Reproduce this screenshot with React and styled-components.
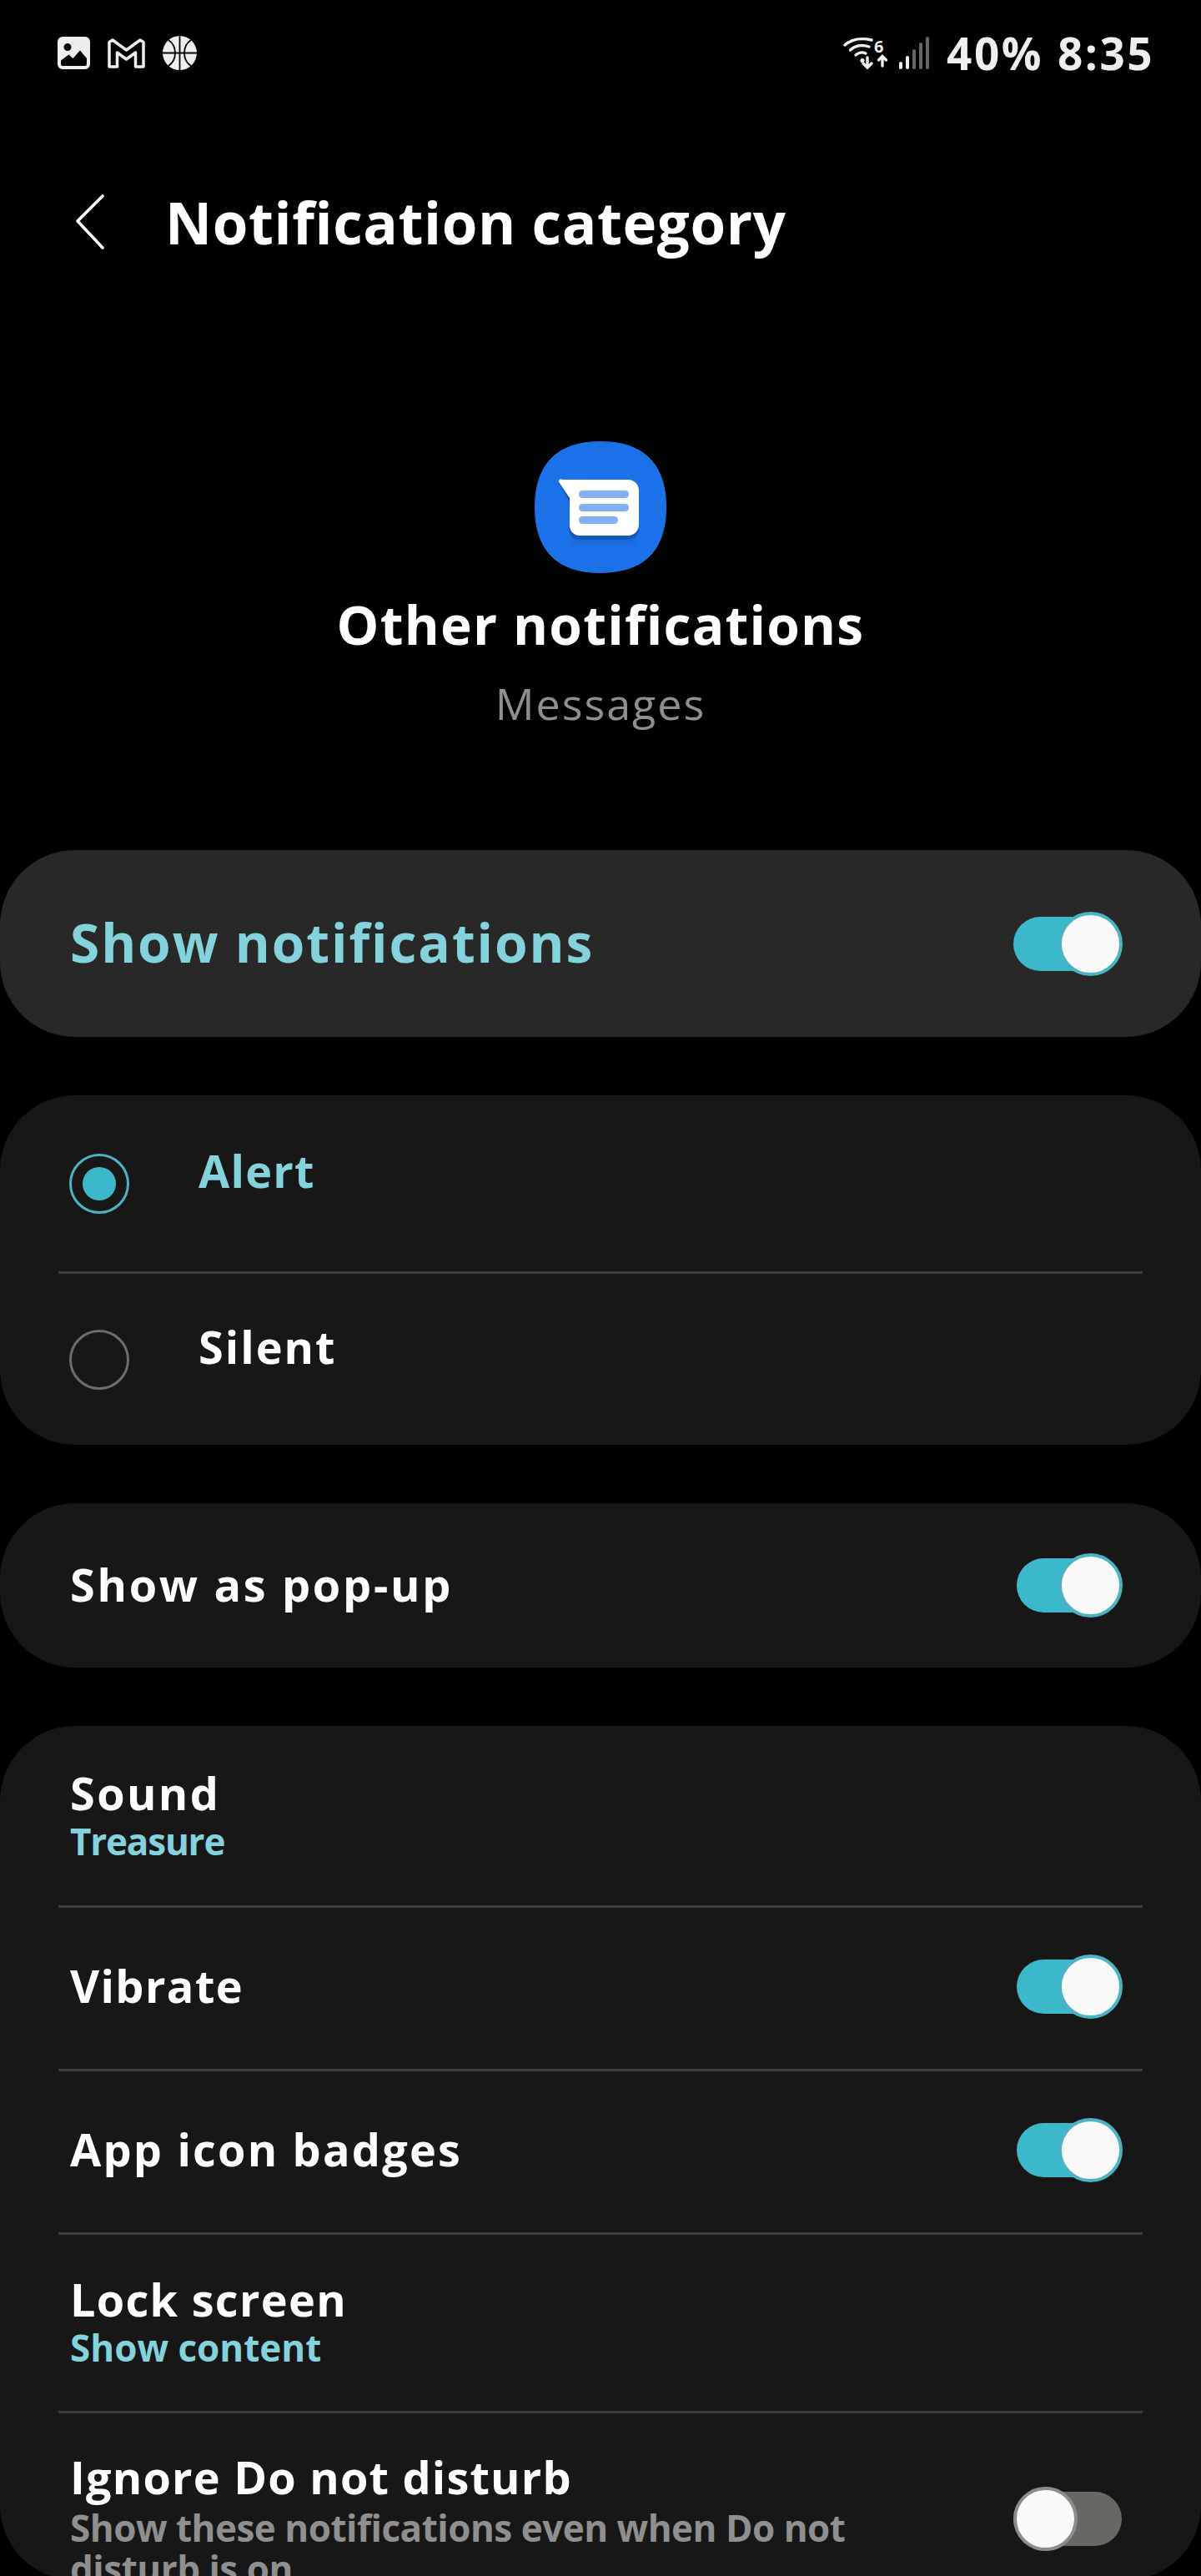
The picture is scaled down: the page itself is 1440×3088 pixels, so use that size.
import React from "react";
import styled, { createGlobalStyle } from "styled-components";

const GlobalStyle = createGlobalStyle`
  html, body {
    margin: 0;
    background: #000;
  }
  #root {
    height: 3088px;
    overflow: hidden;
  }
`;

const FONT = `"Open Sans", "Noto Sans", sans-serif`;

function PictureIcon() {
  return (
    <svg width="39" height="39" viewBox="0 0 39 39">
      <path
        fill="#eee"
        fillRule="evenodd"
        d="M6 0h27a6 6 0 0 1 6 6v27a6 6 0 0 1-6 6H6a6 6 0 0 1-6-6V6a6 6 0 0 1 6-6ZM12 8a4.500 4.500 0 1 0 0 9 4.500 4.500 0 0 0 0-9ZM4 28.500v4.500a2 2 0 0 0 2 2h27a2 2 0 0 0 2-2v-7l-8-9.500-8.500 9.500-5-4.500Z"
      />
    </svg>
  );
}

function MailIcon() {
  return (
    <svg width="45" height="36" viewBox="0 0 45 36">
      <path
        fill="none"
        stroke="#eee"
        strokeWidth="3.500"
        strokeLinejoin="round"
        d="M2 4.500 6 2l16.500 12L39 2l4 2.500V34h-9.500V17l-11 8-11-8v17H2Z"
      />
    </svg>
  );
}

function BallIcon() {
  return (
    <svg width="41" height="41" viewBox="0 0 41 41">
      <circle cx="20.500" cy="20.500" r="20.500" fill="#eee" />
      <path
        fill="none"
        stroke="#000"
        strokeWidth="1.800"
        d="M20.500 0v41M0 20.500h41M7 5c6 4 8 10 8 15.500S13 32 7 36M34 5c-6 4-8 10-8 15.500S28 32 34 36"
      />
    </svg>
  );
}

function WifiIcon() {
  return (
    <svg width="54" height="41" viewBox="0 0 54 41">
      <g fill="none" stroke="#eee" strokeWidth="3.400" strokeLinecap="round">
        <path d="M2 11C10 4 22 2 34 5" />
        <path d="M8.500 17C14 12 22 10 31 13" />
        <path d="M15 23c3-3 8-4 12-2" />
        <path d="M29 26v12M24 33l5 5 5-5" />
        <path d="M47 36V25M42.500 29l4.500-4.500 4.500 4.500" />
      </g>
      <circle cx="23" cy="29.500" r="2.600" fill="#eee" />
      <text x="37" y="20" fill="#eee" fontFamily={FONT} fontSize="20" fontWeight="700">6</text>
    </svg>
  );
}

function SignalIcon() {
  const bars = [
    { x: 0, h: 9, c: "#eee" },
    { x: 8, h: 16, c: "#eee" },
    { x: 16, h: 24, c: "#666" },
    { x: 24, h: 32, c: "#666" },
    { x: 32, h: 39, c: "#666" },
  ];
  return (
    <svg width="36" height="39" viewBox="0 0 36 39">
      {bars.map((b) => (
        <rect key={b.x} x={b.x} y={39 - b.h} width="4" height={b.h} rx="2" fill={b.c} />
      ))}
    </svg>
  );
}

function BackIcon() {
  return (
    <svg width="36" height="66" viewBox="0 0 36 66">
      <path d="M33 2 3 32l30 32" fill="none" stroke="#fff" strokeWidth="3.600" strokeLinecap="round" strokeLinejoin="round" />
    </svg>
  );
}

function MessagesIcon() {
  return (
    <svg width="158" height="158" viewBox="0 0 158 158">
      <defs>
        <linearGradient id="bubbleShade" x1="0" y1="0" x2="0" y2="1">
          <stop offset="0" stopColor="#1558b8" stopOpacity="0.55" />
          <stop offset="1" stopColor="#1a73e8" stopOpacity="0" />
        </linearGradient>
      </defs>
      <path fill="#1b72e8" d="M79 0C131 0 158 27 158 79S131 158 79 158 0 131 0 79 27 0 79 0Z" />
      <path fill="url(#bubbleShade)" d="M44 113h78v20H44Z" />
      <path
        fill="#1558b8"
        d="M30 50l12 18v33a12 12 0 0 0 12 17h58a13 13 0 0 0 13-13v-6H42V74Z"
      />
      <path
        fill="#fff"
        d="M33 46h79a13 13 0 0 1 13 13v41a13 13 0 0 1-13 13H54a12 12 0 0 1-12-12V68L30 50a2.500 2.500 0 0 1 3-4Z"
      />
      <rect x="53" y="59" width="60" height="9" rx="4.500" fill="#86aef5" />
      <rect x="53" y="75" width="60" height="9" rx="4.500" fill="#86aef5" />
      <rect x="53" y="90" width="47" height="9" rx="4.500" fill="#86aef5" />
    </svg>
  );
}

const Page = styled.div`
  font-family: ${FONT};
  font-weight: 700;
  color: #fff;
  background: #000;
`;

const StatusBar = styled.div`
  height: 196px;
  padding: 43px 56px 0 69px;
  box-sizing: border-box;
  display: flex;
  justify-content: space-between;
  align-items: flex-start;
`;

const StatusGroup = styled.div`
  display: flex;
  align-items: center;
  gap: ${(p) => p.$gap}px;
`;

const StatusText = styled.span`
  font-size: 53px;
  line-height: 40px;
  color: #eee;
  letter-spacing: 2.500px;
  margin-left: ${(p) => p.$left || 0}px;
`;

const Header = styled.div`
  display: flex;
  align-items: center;
  height: 140px;
  padding-left: 90px;
`;

const HeaderTitle = styled.h1`
  margin: 0 0 0 72px;
  font-size: 69px;
  line-height: 80px;
  letter-spacing: 0.600px;
  font-weight: 700;
`;

const Hero = styled.div`
  display: flex;
  flex-direction: column;
  align-items: center;
  padding-top: 193px;
`;

const HeroTitle = styled.div`
  font-size: 64px;
  line-height: 80px;
  letter-spacing: 1.200px;
  margin-top: 22px;
`;

const HeroSub = styled.div`
  font-size: 52px;
  line-height: 60px;
  letter-spacing: 2px;
  margin-top: 24px;
  color: #8f8f8f;
  font-weight: 500;
`;

const Cards = styled.div`
  display: flex;
  flex-direction: column;
  gap: 70px;
  margin-top: 146px;
`;

const Card = styled.section`
  background: ${(p) => (p.$light ? "#282828" : "#171717")};
  border-radius: 90px;
`;

const Row = styled.div`
  height: ${(p) => p.$height}px;
  padding: 0 95px ${(p) => p.$lift || 0}px 84px;
  box-sizing: border-box;
  display: flex;
  align-items: center;
  justify-content: space-between;
`;

const TopRow = styled(Row)`
  align-items: flex-start;
  padding-top: 44px;
`;

const RadioRow = styled(Row)`
  justify-content: flex-start;
  gap: 83px;
  padding-left: 83px;
`;

const Divider = styled.div`
  height: 3px;
  margin: 0 70px;
  background: #3c3c3c;
`;

const RowText = styled.div`
  display: flex;
  flex-direction: column;
  min-width: 0;
`;

const Label = styled.div`
  font-size: ${(p) => p.$size || 54}px;
  line-height: 64px;
  letter-spacing: ${(p) => p.$spacing || 0}px;
  margin-bottom: ${(p) => p.$lift || 0}px;
  color: ${(p) => (p.$active ? "#84d2dc" : "#fff")};
`;

const RadioLabel = styled(Label)`
  margin-bottom: 32px;
`;

const Sub = styled.div`
  font-size: 44px;
  line-height: 49px;
  margin-top: ${(p) => (p.$muted ? 5 : 2)}px;
  letter-spacing: ${(p) => p.$spacing || 0}px;
  color: ${(p) => (p.$muted ? "#8f8f8f" : "#84d2dc")};
  max-width: 960px;
`;

const Radio = styled.div`
  width: 72px;
  height: 72px;
  box-sizing: border-box;
  border-radius: 50%;
  border: 3px solid ${(p) => (p.$on ? "#4cb3c4" : "#6d6d6d")};
  display: flex;
  align-items: center;
  justify-content: center;
  flex-shrink: 0;
  &::after {
    content: "";
    display: ${(p) => (p.$on ? "block" : "none")};
    width: 40px;
    height: 40px;
    border-radius: 50%;
    background: #3cb8cb;
  }
`;

const Toggle = styled.div`
  position: relative;
  width: ${(p) => p.$width || 126}px;
  height: 65px;
  margin-top: ${(p) => p.$top || 0}px;
  border-radius: 33px;
  background: ${(p) => (p.$on ? "#3cb8cb" : "#666861")};
  flex-shrink: 0;
`;

const Thumb = styled.div`
  position: absolute;
  top: -6px;
  ${(p) => (p.$on ? "right: -1px;" : "left: 0;")}
  width: 77px;
  height: 77px;
  box-sizing: border-box;
  border-radius: 50%;
  background: #fafafa;
  border: 4px solid ${(p) => (p.$on ? "#4cb3c4" : "#8c8c8c")};
`;

function Switch({ on = true, width, top }) {
  return (
    <Toggle $on={on} $width={width} $top={top}>
      <Thumb $on={on} />
    </Toggle>
  );
}

export default function App() {
  return (
    <Page>
      <GlobalStyle />
      <StatusBar>
        <StatusGroup $gap={21}>
          <PictureIcon />
          <MailIcon />
          <BallIcon />
        </StatusGroup>
        <StatusGroup $gap={13}>
          <WifiIcon />
          <SignalIcon />
          <StatusText $left={8}>40%</StatusText>
          <StatusText $left={4}>8:35</StatusText>
        </StatusGroup>
      </StatusBar>

      <Header>
        <BackIcon />
        <HeaderTitle>Notification category</HeaderTitle>
      </Header>

      <Hero>
        <MessagesIcon />
        <HeroTitle>Other notifications</HeroTitle>
        <HeroSub>Messages</HeroSub>
      </Hero>

      <Cards>
        <Card $light>
          <Row $height={224}>
            <Label $active $size={64} $spacing={1.9} $lift={3}>Show notifications</Label>
            <Switch width={130} />
          </Row>
        </Card>

        <Card>
          <RadioRow $height={211}>
            <Radio $on />
            <RadioLabel $active $spacing={1.2}>Alert</RadioLabel>
          </RadioRow>
          <Divider />
          <RadioRow $height={205}>
            <Radio />
            <RadioLabel $spacing={2}>Silent</RadioLabel>
          </RadioRow>
        </Card>

        <Card>
          <Row $height={197}>
            <Label $spacing={2.7} $lift={4}>Show as pop-up</Label>
            <Switch />
          </Row>
        </Card>

        <Card>
          <Row $height={215} $lift={4}>
            <RowText>
              <Label $spacing={2.4}>Sound</Label>
              <Sub $spacing={-1.2}>Treasure</Sub>
            </RowText>
          </Row>
          <Divider />
          <Row $height={193} $lift={5}>
            <Label $spacing={1.4} $lift={3}>Vibrate</Label>
            <Switch />
          </Row>
          <Divider />
          <Row $height={193} $lift={5}>
            <Label $spacing={2.2} $lift={3}>App icon badges</Label>
            <Switch />
          </Row>
          <Divider />
          <Row $height={211} $lift={7}>
            <RowText>
              <Label $spacing={1.3}>Lock screen</Label>
              <Sub>Show content</Sub>
            </RowText>
          </Row>
          <Divider />
          <TopRow $height={200}>
            <RowText>
              <Label $spacing={1.2}>Ignore Do not disturb</Label>
              <Sub $muted $spacing={-0.5}>Show these notifications even when Do not disturb is on.</Sub>
            </RowText>
            <Switch on={false} width={130} top={50} />
          </TopRow>
        </Card>
      </Cards>
    </Page>
  );
}
